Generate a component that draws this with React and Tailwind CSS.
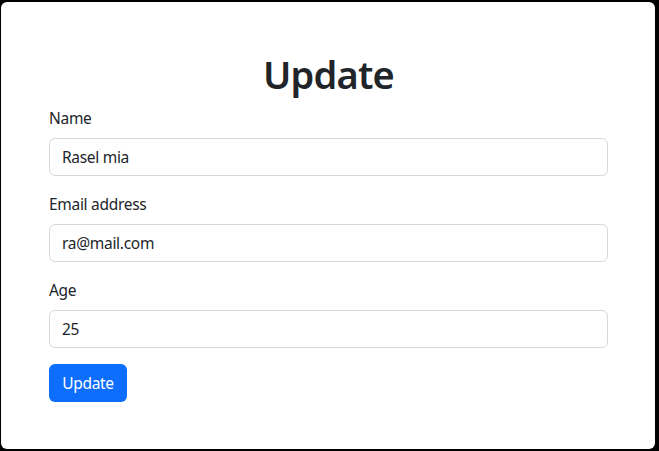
export default function App() {
  const font = { fontFamily: '"Segoe UI", "Noto Sans", "Liberation Sans", sans-serif' };
  const fields = [
    { label: "Name", value: "Rasel mia" },
    { label: "Email address", value: "ra@mail.com" },
    { label: "Age", value: "25" },
  ];
  return (
    <div className="h-[451px] w-[659px] bg-black pt-[2px] pl-[1px] pr-[4px] pb-[2px] flex" style={font}>
      <div className="flex-1 bg-white rounded-[6px] pt-[48px] pl-[48px] pr-[47px] pb-[47px] text-[#212529]">
        <h1 className="text-center text-[38px] tracking-[-0.8px] leading-[48px] font-semibold mb-[8px]">Update</h1>
        {fields.map((f) => (
          <div key={f.label} className="mb-4">
            <label className="block text-[15.5px] tracking-[-0.3px] leading-[24px] mb-[8px]">{f.label}</label>
            <input
              readOnly
              value={f.value}
              className="block w-full h-[38px] px-[12px] text-[15.5px] tracking-[-0.3px] leading-[24px] text-[#212529] border border-[#d6dadf] rounded-[6px] bg-white outline-none"
              style={font}
            />
          </div>
        ))}
        <button className="h-[38px] w-[78px] bg-[#0d6efd] text-white text-[15.5px] tracking-[-0.3px] leading-[24px] rounded-[6px]" style={font}>
          Update
        </button>
      </div>
    </div>
  );
}
